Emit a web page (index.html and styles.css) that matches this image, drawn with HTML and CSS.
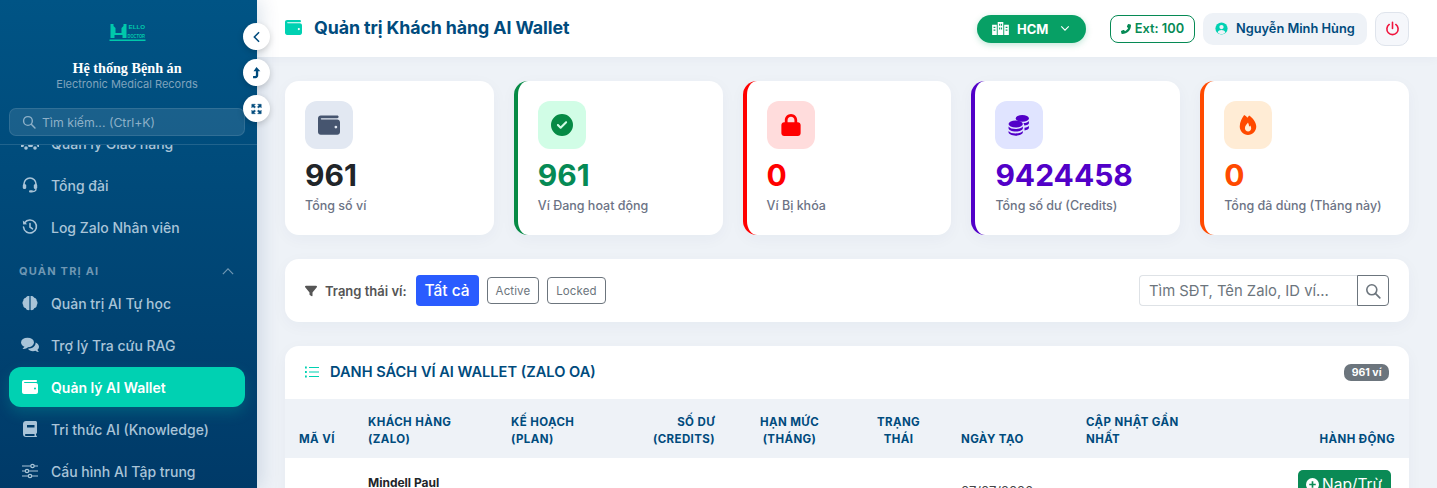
FILE: index.html
```html
<!DOCTYPE html>
<html lang="vi">
<head>
    <meta charset="UTF-8">
    <meta name="viewport" content="width=device-width, initial-scale=1.0">
    <title>Quản trị Khách hàng AI Wallet</title>
    <link rel="stylesheet" href="styles.css">
</head>
<body>
    <svg class="sprite" aria-hidden="true">
        <symbol id="i-wallet" viewBox="0 0 512 512"><path d="M64 32C28.7 32 0 60.7 0 96V416c0 35.3 28.7 64 64 64H448c35.3 0 64-28.7 64-64V192c0-35.3-28.7-64-64-64H80c-8.8 0-16-7.2-16-16s7.2-16 16-16H448c17.7 0 32-14.3 32-32s-14.3-32-32-32H64zM416 272a32 32 0 1 1 0 64 32 32 0 1 1 0-64z"/></symbol>
        <symbol id="i-check" viewBox="0 0 512 512"><path d="M256 512A256 256 0 1 0 256 0a256 256 0 1 0 0 512zM369 209L241 337c-9.4 9.4-24.6 9.4-33.9 0l-64-64c-9.4-9.4-9.4-24.6 0-33.9s24.6-9.4 33.9 0l47 47L335 175c9.4-9.4 24.6-9.4 33.9 0s9.4 24.6 0 33.9z"/></symbol>
        <symbol id="i-lock" viewBox="0 0 448 512"><path d="M144 144v48H304V144c0-44.2-35.8-80-80-80s-80 35.8-80 80zM80 192V144C80 64.5 144.5 0 224 0s144 64.5 144 144v48h16c35.3 0 64 28.7 64 64V448c0 35.3-28.7 64-64 64H64c-35.3 0-64-28.7-64-64V256c0-35.3 28.7-64 64-64H80z"/></symbol>
        <symbol id="i-filter" viewBox="0 0 512 512"><path d="M3.9 54.9C10.5 40.9 24.5 32 40 32H472c15.5 0 29.5 8.9 36.1 22.9s4.6 30.5-5.2 42.5L320 320.9V448c0 12.1-6.8 23.2-17.7 28.6s-23.8 4.3-33.5-3l-64-48c-8.1-6-12.8-15.5-12.8-25.6V320.9L9 97.3C-.7 85.4-2.8 68.8 3.9 54.9z"/></symbol>
        <symbol id="i-phone" viewBox="0 0 512 512"><path transform="matrix(-1 0 0 1 512 0)" d="M164.9 24.6c-7.7-18.6-28-28.5-47.4-23.2l-88 24C12.1 30.2 0 46 0 64C0 311.4 200.6 512 448 512c18 0 33.8-12.1 38.6-29.5l24-88c5.3-19.4-4.6-39.7-23.2-47.4l-96-40c-16.3-6.8-35.2-2.1-46.3 11.6L304.7 368C234.3 334.7 177.3 277.7 144 207.3L193.3 167c13.7-11.2 18.4-30 11.6-46.3l-40-96z"/></symbol>
        <symbol id="i-search" viewBox="0 0 16 16"><circle cx="6.8" cy="6.8" r="5" fill="none" stroke="currentColor" stroke-width="1.6"/><path d="M10.6 10.6l4.2 4.2" stroke="currentColor" stroke-width="1.7" stroke-linecap="round"/></symbol>
        <symbol id="i-coins" viewBox="0 0 20 20"><ellipse cx="13" cy="4" rx="6" ry="3"/><path d="M14 8.2c2.4-.1 4.4-.8 5-1.9v2c0 1-1.800 1.900-4.200 2.200 0-.9-.3-1.600-.8-2.300zM15 12.600c1.900-.3 3.400-1 4-1.900v2c0 1-1.700 1.900-4 2.200z"/><ellipse cx="7" cy="9" rx="6.500" ry="3.200"/><path d="M.5 11.400c1 1.500 3.500 2.300 6.500 2.300s5.500-.8 6.500-2.300v1.500c0 1.700-2.900 3-6.500 3s-6.500-1.300-6.500-3zM.5 15.400c1 1.500 3.500 2.300 6.500 2.300s5.500-.8 6.500-2.300v1.300c0 1.700-2.900 3-6.500 3s-6.500-1.300-6.500-3z"/></symbol>
        <symbol id="i-fire" viewBox="0 0 20 20"><path fill-rule="evenodd" d="M6.500 1c1 .4 2 1.200 2.900 2.500.5-.8 1-1.500 1.600-2.200 3.500 2.300 6.500 6.300 6.500 10 0 4.300-3.400 7.700-7.500 7.700s-7.500-3.400-7.500-7.700C2.500 7.500 4.500 3.700 6.500 1zM10 7.800c-.5 1.200-2.800 2.700-2.800 5.100 0 1.700 1.300 3 2.900 3s2.800-1.300 2.800-3c0-.8-.3-1.700-.8-2.500-.4.500-.8.900-1.100 1-.1-1.300-.4-2.500-1-3.600z"/></symbol>
    </svg>

    <div class="app">
        <aside class="sidebar">
            <div class="side-head">
                <svg class="logo" viewBox="0 0 36 20" aria-label="Hello Doctor">
                    <path d="M1 2h3v2l2 2v5h6V6l2-2V2h3v14h-4v-3H5v3H1z"/>
                    <text x="19" y="6.500" class="logo-top" textLength="16.500" lengthAdjust="spacingAndGlyphs">ELLO</text>
                    <text x="18" y="15.500" class="logo-bottom" textLength="17.500" lengthAdjust="spacingAndGlyphs">DOCTOR</text>
                    <rect x="0" y="17.500" width="36" height="1.500"/>
                </svg>
                <div class="side-title">Hệ thống Bệnh án</div>
                <div class="side-sub">Electronic Medical Records</div>
                <div class="side-search">
                    <svg class="icon icon-14"><use href="#i-search"/></svg>
                    <span>Tìm kiếm... (Ctrl+K)</span>
                </div>
            </div>
            <nav class="side-nav">
                <ul class="nav-list">
                    <li class="nav-item">
                        <svg class="nav-icon nav-icon-wide" viewBox="0 0 18 16"><path d="M0 2h11v3h3l4 4v3h-1.500a2.500 2.500 0 0 0-5 0h-4a2.500 2.500 0 0 0-5 0H0z"/><circle cx="5" cy="13" r="1.800"/><circle cx="14" cy="13" r="1.800"/></svg>
                        Quản lý Giao hàng
                    </li>
                    <li class="nav-item">
                        <svg class="nav-icon" viewBox="0 0 16 16"><path d="M2 9V7a6 6 0 0 1 12 0v2" fill="none" stroke="currentColor" stroke-width="1.600"/><rect x=".8" y="7" width="3.400" height="5" rx="1.500"/><rect x="11.800" y="7" width="3.400" height="5" rx="1.500"/><path d="M14 12c0 1.800-1.500 2.500-3.500 2.500" fill="none" stroke="currentColor" stroke-width="1.300"/><rect x="7" y="13.300" width="4" height="2.200" rx="1.100"/></svg>
                        Tổng đài
                    </li>
                    <li class="nav-item">
                        <svg class="nav-icon" viewBox="0 0 16 16"><path d="M2.600 3.800A6.500 6.500 0 1 1 1.500 8" fill="none" stroke="currentColor" stroke-width="1.600" stroke-linecap="round"/><path d="M.8 1.600l.4 4 4-.4z"/><path d="M8 4.500V8l2.500 1.800" fill="none" stroke="currentColor" stroke-width="1.600" stroke-linecap="round"/></svg>
                        Log Zalo Nhân viên
                    </li>
                    <li class="nav-label">
                        <span>Quản trị AI</span>
                        <svg class="nav-chevron" viewBox="0 0 14 8"><path d="M1 7l6-6 6 6" fill="none" stroke="currentColor" stroke-width="1.400"/></svg>
                    </li>
                    <li class="nav-item">
                        <svg class="nav-icon" viewBox="0 0 16 16"><path d="M7.400 1v14c-1.500.5-3.200-.3-3.600-1.800C2 13 1 11.500 1.200 10 .2 8.800.2 6.800 1.300 5.800 1.200 4 2.500 3 3.800 2.800 4.500 1.200 6 .6 7.400 1zM8.600 1v14c1.500.5 3.200-.3 3.600-1.800 1.800-.2 2.800-1.700 2.600-3.200 1-1.200 1-3.200-.1-4.200.1-1.800-1.200-2.800-2.500-3C11.500 1.200 10 .6 8.600 1z"/></svg>
                        Quản trị AI Tự học
                    </li>
                    <li class="nav-item">
                        <svg class="nav-icon nav-icon-wide" viewBox="0 0 18 16"><ellipse cx="6.500" cy="5.500" rx="6.500" ry="4.800"/><path d="M1.500 12l2.500-3 3 1.500c-2 1-4 1.500-5.500 1.500z"/><path d="M14.600 5.500c2 .8 3.400 2.400 3.400 4.200 0 1.200-.6 2.200-1.500 3 .2.900.8 1.700 1.500 2.300-1.400 0-2.600-.4-3.500-1.200-.8.300-1.600.4-2.500.4-2.300 0-4.200-1-5-2.500 4.400 0 7.800-2.600 7.600-6.200z"/></svg>
                        Trợ lý Tra cứu RAG
                    </li>
                    <li class="nav-item active">
                        <svg class="nav-icon"><use href="#i-wallet"/></svg>
                        Quản lý AI Wallet
                    </li>
                    <li class="nav-item">
                        <svg class="nav-icon" viewBox="0 0 14 16"><path fill-rule="evenodd" d="M3 0h9.500c.8 0 1.500.7 1.500 1.500v10c0 .6-.4 1.100-1 1.400v1.500c.6.100 1 .5 1 1 0 .4-.4.600-1 .6H3c-1.700 0-3-1.300-3-3V3c0-1.700 1.300-3 3-3zM3 13c-.6 0-1 .5-1 .9s.4 1 1 1h8.500V13zM4 4v2.500h7.500V4z"/></svg>
                        Tri thức AI (Knowledge)
                    </li>
                    <li class="nav-item">
                        <svg class="nav-icon" viewBox="0 0 16 16"><path d="M0 3h16M0 8h16M0 13h16" stroke="currentColor" stroke-width="1.200"/><g fill="#004069" stroke="currentColor" stroke-width="1.200"><circle cx="10.500" cy="3" r="1.700"/><circle cx="5" cy="8" r="1.700"/><circle cx="8" cy="13" r="1.700"/></g></svg>
                        Cấu hình AI Tập trung
                    </li>
                </ul>
            </nav>
        </aside>

        <div class="side-tools">
            <button class="tool-btn"><svg viewBox="0 0 10 14" class="tool-icon"><path d="M8 1.500L2.500 7 8 12.500" fill="none" stroke="currentColor" stroke-width="1.800"/></svg></button>
            <button class="tool-btn"><svg viewBox="0 0 10 14" class="tool-icon"><path d="M5 0L9.500 5H7v5c0 1.800-1.200 3-3 3H1v-2.500h2.500c.5 0 .8-.3.8-.8V5H1.500z" fill="currentColor"/></svg></button>
            <button class="tool-btn"><svg viewBox="0 0 14 14" class="tool-icon"><path d="M1 1h4.500L4 2.500 5.800 4.300 4.300 5.800 2.500 4 1 5.500zM13 1v4.500L11.500 4 9.700 5.800 8.200 4.300 10 2.500 8.500 1zM1 13V8.500L2.500 10l1.800-1.800 1.500 1.500L4 11.500 5.500 13zM13 13H8.500l1.500-1.500-1.800-1.800 1.500-1.500 1.800 1.800L13 8.500z" fill="currentColor" stroke="currentColor" stroke-width=".6"/></svg></button>
        </div>

        <div class="main">
            <header class="topbar">
                <h1 class="page-title">
                    <svg class="title-icon"><use href="#i-wallet"/></svg>
                    Quản trị Khách hàng AI Wallet
                </h1>
                <div class="top-right">
                    <button class="branch-pill">
                        <svg class="branch-icon" viewBox="0 0 18 14"><path fill-rule="evenodd" d="M0 3h5v11H0zM6 0h6v14H6zM13 3h5v11h-5zM1.500 5v1.500h2V5zM1.500 8v1.500h2V8zM7.500 2v2h1.200V2zM9.500 2v2h1.200V2zM7.500 6v2h1.200V6zM9.500 6v2h1.200V6zM14.500 5v1.500h2V5zM14.500 8v1.500h2V8z"/></svg>
                        HCM
                        <svg class="branch-caret" viewBox="0 0 12 8"><path d="M1.500 1.500L6 6l4.500-4.500" fill="none" stroke="currentColor" stroke-width="1.400"/></svg>
                    </button>
                    <div class="ext-badge"><svg class="icon icon-10"><use href="#i-phone"/></svg> Ext: 100</div>
                    <div class="user-chip">
                        <svg class="user-icon" viewBox="0 0 16 16"><circle cx="8" cy="8" r="6.500" fill="#00d1b2"/><circle cx="8" cy="6.500" r="2.300" fill="#eef2f7"/><path d="M3.800 12.200c.8-1.800 2.300-2.500 4.200-2.500s3.400.7 4.200 2.500A6 6 0 0 1 8 14a6 6 0 0 1-4.200-1.800z" fill="#eef2f7"/></svg>
                        Nguyễn Minh Hùng
                    </div>
                    <button class="power-btn"><svg viewBox="0 0 16 16" class="power-icon"><path d="M4.500 3.700a6 6 0 1 0 7 0M8 1.500v6.500" fill="none" stroke="currentColor" stroke-width="1.700" stroke-linecap="round"/></svg></button>
                </div>
            </header>

            <main class="content">
                <section class="stats">
                    <div class="stat-card">
                        <div class="stat-icon slate"><svg class="icon icon-22"><use href="#i-wallet"/></svg></div>
                        <div class="stat-value">961</div>
                        <div class="stat-label">Tổng số ví</div>
                    </div>
                    <div class="stat-card green">
                        <div class="stat-icon"><svg class="icon icon-22"><use href="#i-check"/></svg></div>
                        <div class="stat-value">961</div>
                        <div class="stat-label">Ví Đang hoạt động</div>
                    </div>
                    <div class="stat-card red">
                        <div class="stat-icon"><svg class="icon icon-22"><use href="#i-lock"/></svg></div>
                        <div class="stat-value">0</div>
                        <div class="stat-label">Ví Bị khóa</div>
                    </div>
                    <div class="stat-card purple">
                        <div class="stat-icon"><svg class="icon icon-22"><use href="#i-coins"/></svg></div>
                        <div class="stat-value">9424458</div>
                        <div class="stat-label">Tổng số dư (Credits)</div>
                    </div>
                    <div class="stat-card orange">
                        <div class="stat-icon"><svg class="icon icon-22"><use href="#i-fire"/></svg></div>
                        <div class="stat-value">0</div>
                        <div class="stat-label">Tổng đã dùng (Tháng này)</div>
                    </div>
                </section>

                <section class="filter-card">
                    <svg class="icon icon-12 filter-icon"><use href="#i-filter"/></svg>
                    <span class="filter-label">Trạng thái ví:</span>
                    <button class="btn-all">Tất cả</button>
                    <button class="btn-outline">Active</button>
                    <button class="btn-outline">Locked</button>
                    <div class="search-group">
                        <div class="search-input">Tìm SĐT, Tên Zalo, ID ví...</div>
                        <button class="search-btn"><svg class="icon icon-16"><use href="#i-search"/></svg></button>
                    </div>
                </section>

                <section class="table-card">
                    <div class="table-head">
                        <svg class="list-icon" viewBox="0 0 14 12"><path d="M4 1.500h10M4 6h10M4 10.500h10" stroke="currentColor" stroke-width="1.200"/><path d="M0 .6h1.800v1.800H0zM0 5.100h1.800v1.800H0zM0 9.600h1.800v1.800H0z" fill="currentColor"/></svg>
                        <h2 class="table-title">DANH SÁCH VÍ AI WALLET (ZALO OA)</h2>
                        <span class="count-badge">961 ví</span>
                    </div>
                    <table class="wallet-table">
                        <colgroup>
                            <col class="c-id"><col class="c-customer"><col class="c-plan"><col class="c-balance">
                            <col class="c-limit"><col class="c-status"><col class="c-created"><col class="c-updated"><col>
                        </colgroup>
                        <thead>
                            <tr>
                                <th>Mã ví</th>
                                <th>Khách hàng (Zalo)</th>
                                <th>Kế hoạch (Plan)</th>
                                <th class="right">Số dư (Credits)</th>
                                <th class="center">Hạn mức (Tháng)</th>
                                <th class="center">Trạng thái</th>
                                <th>Ngày tạo</th>
                                <th>Cập nhật gần nhất</th>
                                <th class="right">Hành động</th>
                            </tr>
                        </thead>
                        <tbody>
                            <tr>
                                <td></td>
                                <td><div class="cust-name">Mindell Paul</div></td>
                                <td></td>
                                <td></td>
                                <td></td>
                                <td></td>
                                <td class="date-cell">07/07/2026</td>
                                <td></td>
                                <td class="right">
                                    <button class="btn-topup">
                                        <svg class="topup-icon" viewBox="0 0 14 14"><circle cx="7" cy="7" r="7" fill="#fff"/><path d="M7 3.500v7M3.500 7h7" stroke="#0a8a55" stroke-width="1.800"/></svg>
                                        Nạp/Trừ
                                    </button>
                                </td>
                            </tr>
                        </tbody>
                    </table>
                </section>
            </main>
        </div>
    </div>
</body>
</html>
```

FILE: styles.css
```css
* {
    box-sizing: border-box;
}
html, body {
    height: 100%;
}
body {
    margin: 0;
    font-family: Inter, "Noto Sans", sans-serif;
    color: #212529;
    background-color: #eef2f7;
    overflow: hidden;
}
button {
    font-family: inherit;
    cursor: pointer;
}
.sprite {
    display: none;
}
.icon {
    fill: currentColor;
    display: block;
}
.icon-10 { width: 10px; height: 10px; }
.icon-12 { width: 12px; height: 12px; }
.icon-14 { width: 14px; height: 14px; }
.icon-16 { width: 16px; height: 16px; }
.icon-22 { width: 22px; height: 22px; }

.app {
    display: flex;
    height: 100vh;
    position: relative;
}

/* sidebar */
.sidebar {
    width: 257px;
    flex-shrink: 0;
    display: flex;
    flex-direction: column;
    background: linear-gradient(180deg, #005485 0%, #003a68 100%);
    box-shadow: 4px 0 18px rgba(0, 60, 110, 0.14);
    z-index: 2;
}
.side-head {
    height: 145px;
    flex-shrink: 0;
    padding: 22px 12px 0 9px;
    border-bottom: 1px solid rgba(255, 255, 255, 0.13);
    text-align: center;
}
.logo {
    display: block;
    width: 37px;
    height: 20px;
    margin: 0 auto;
    fill: #00c9ab;
}
.logo-top,
.logo-bottom {
    font-family: "Liberation Sans", sans-serif;
    font-size: 6px;
    font-weight: 700;
}
.side-title {
    margin-top: 17px;
    font-family: "Liberation Serif", serif;
    font-size: 14.200px;
    line-height: 18px;
    font-weight: 700;
    color: #fff;
}
.side-sub {
    font-size: 11px;
    line-height: 15px;
    color: #7fa3bd;
}
.side-search {
    display: flex;
    align-items: center;
    gap: 6px;
    height: 28px;
    margin-top: 16px;
    padding-left: 12px;
    font-size: 12.300px;
    color: #8db0c8;
    background-color: rgba(255, 255, 255, 0.1);
    border: 1px solid rgba(255, 255, 255, 0.1);
    border-radius: 7px;
    text-align: left;
}
.side-nav {
    flex: 1;
    overflow: hidden;
    padding: 0 12px 0 9px;
}
.nav-list {
    list-style: none;
    margin: -22px 0 0;
    padding: 0;
}
.nav-item {
    display: flex;
    align-items: center;
    gap: 13px;
    height: 40px;
    margin-bottom: 2px;
    padding-left: 13px;
    font-size: 14px;
    font-weight: 500;
    color: #a9c4d8;
    border-radius: 12px;
}
.nav-item.active {
    color: #fff;
    font-weight: 600;
    background-color: #00d1b2;
    box-shadow: 0 6px 14px rgba(0, 209, 178, 0.2);
}
.nav-icon {
    width: 16px;
    height: 16px;
    flex-shrink: 0;
    fill: currentColor;
}
.nav-icon-wide {
    width: 18px;
    margin: 0 -1px;
}
.nav-label {
    display: flex;
    align-items: center;
    justify-content: space-between;
    height: 34px;
    padding: 10px 11px 0 10px;
    font-size: 11px;
    font-weight: 700;
    letter-spacing: 1.200px;
    text-transform: uppercase;
    color: #6f97b3;
}
.nav-chevron {
    width: 12px;
    height: 7px;
}

/* round buttons on the sidebar edge */
.side-tools {
    position: absolute;
    left: 243px;
    top: 23px;
    display: flex;
    flex-direction: column;
    gap: 9px;
    z-index: 3;
}
.tool-btn {
    display: flex;
    align-items: center;
    justify-content: center;
    width: 27px;
    height: 27px;
    padding: 0;
    border: 0;
    border-radius: 50%;
    color: #004b7d;
    background-color: #fff;
    box-shadow: 0 2px 6px rgba(0, 0, 0, 0.18);
}
.tool-icon {
    width: 11px;
    height: 12px;
}

/* top bar */
.main {
    flex: 1;
    min-width: 0;
    display: flex;
    flex-direction: column;
}
.topbar {
    display: flex;
    align-items: center;
    justify-content: space-between;
    height: 57px;
    flex-shrink: 0;
    padding: 0 28px;
    background-color: #fff;
    box-shadow: 0 2px 10px rgba(0, 40, 90, 0.04);
}
.page-title {
    display: flex;
    align-items: center;
    gap: 12px;
    margin: 0;
    padding-bottom: 2px;
    font-size: 17.800px;
    font-weight: 700;
    color: #004b7d;
    letter-spacing: -0.1px;
}
.title-icon {
    width: 17px;
    height: 17px;
    fill: #00d1b2;
}
.top-right {
    display: flex;
    align-items: center;
    gap: 8px;
}
.branch-pill {
    display: flex;
    align-items: center;
    width: 109px;
    height: 28px;
    margin-right: 16px;
    padding: 0 16px 0 15px;
    font-size: 13px;
    font-weight: 700;
    color: #fff;
    background-color: #07a065;
    border: 0;
    border-radius: 14px;
    box-shadow: 0 2px 6px rgba(7, 160, 101, 0.25);
}
.branch-icon {
    width: 17px;
    height: 13px;
    margin-right: 8px;
    fill: currentColor;
}
.branch-caret {
    width: 10px;
    height: 7px;
    margin-left: auto;
}
.ext-badge {
    display: flex;
    align-items: center;
    gap: 4px;
    width: 85px;
    height: 28px;
    justify-content: center;
    font-size: 12.800px;
    font-weight: 600;
    color: #068a55;
    background-color: #fff;
    border: 1px solid #068a55;
    border-radius: 8px;
}
.user-chip {
    display: flex;
    align-items: center;
    gap: 7px;
    width: 164px;
    height: 32px;
    padding-left: 11px;
    font-size: 12.800px;
    font-weight: 600;
    color: #004b7d;
    background-color: #eef2f7;
    border-radius: 10px;
}
.user-icon {
    width: 15px;
    height: 15px;
}
.power-btn {
    display: flex;
    align-items: center;
    justify-content: center;
    width: 34px;
    height: 34px;
    padding: 0;
    color: #f0143c;
    background-color: #f5f7fb;
    border: 1px solid #dfe4ec;
    border-radius: 10px;
}
.power-icon {
    width: 15px;
    height: 15px;
}

/* page content */
.content {
    flex: 1;
    padding: 24px 28px;
    overflow: hidden;
}
.stats {
    display: grid;
    grid-template-columns: repeat(5, 1fr);
    gap: 20px;
    margin-bottom: 24px;
}
.stat-card {
    height: 154px;
    padding: 20px;
    background-color: #fff;
    border-radius: 14px;
    box-shadow: 0 4px 16px rgba(0, 40, 90, 0.04);
}
.stat-icon {
    display: flex;
    align-items: center;
    justify-content: center;
    width: 48px;
    height: 48px;
    border-radius: 12px;
    background-color: #e2e8f2;
    color: #46556f;
    margin-bottom: 8px;
}
.stat-value {
    font-size: 30px;
    line-height: 36px;
    font-weight: 700;
    color: #212529;
}
.stat-label {
    margin-top: 4px;
    font-size: 12.500px;
    line-height: 18px;
    font-weight: 500;
    color: #6c7385;
}
.stat-card.green { border-left: 4px solid #068a45; }
.stat-card.green .stat-icon { background-color: #d1fde6; color: #068a45; }
.stat-card.green .stat-value { color: #068a55; }
.stat-card.red { border-left: 4px solid #f00; }
.stat-card.red .stat-icon { background-color: #ffdcdc; color: #f00; }
.stat-card.red .stat-value { color: #f00; }
.stat-card.purple { border-left: 4px solid #5200c8; }
.stat-card.purple .stat-icon { background-color: #e0e4ff; color: #5200c8; }
.stat-card.purple .stat-value { color: #5200c8; }
.stat-card.orange { border-left: 4px solid #ff4a00; }
.stat-card.orange .stat-icon { background-color: #ffecd5; color: #ff4a00; }
.stat-card.orange .stat-value { color: #ff4a00; }

/* filter row */
.filter-card {
    display: flex;
    align-items: center;
    height: 63px;
    margin-bottom: 24px;
    padding: 0 20px;
    background-color: #fff;
    border-radius: 14px;
    box-shadow: 0 4px 16px rgba(0, 40, 90, 0.04);
}
.filter-icon {
    color: #555;
    margin-right: 8px;
}
.filter-label {
    margin-right: 9px;
    font-size: 13px;
    font-weight: 600;
    color: #555;
}
.btn-all {
    width: 63px;
    height: 31px;
    margin-right: 8px;
    padding: 0;
    font-size: 15.500px;
    font-weight: 500;
    color: #fff;
    background-color: #2a5cff;
    border: 0;
    border-radius: 4px;
}
.btn-outline {
    height: 27px;
    margin-right: 8px;
    padding: 0 8px;
    font-size: 11.500px;
    letter-spacing: 0.1px;
    color: #6c757d;
    background-color: #fff;
    border: 1px solid #6c757d;
    border-radius: 4px;
}
.search-group {
    display: flex;
    width: 250px;
    height: 31px;
    margin-left: auto;
}
.search-input {
    flex: 1;
    display: flex;
    align-items: center;
    padding-left: 9px;
    font-size: 14.800px;
    color: #6c757d;
    border: 1px solid #dee2e6;
    border-right: 0;
    border-radius: 4px 0 0 4px;
}
.search-btn {
    display: flex;
    align-items: center;
    justify-content: center;
    width: 32px;
    padding: 0;
    color: #6c757d;
    background-color: #fff;
    border: 1px solid #6c757d;
    border-radius: 0 4px 4px 0;
}

/* wallet table */
.table-card {
    background-color: #fff;
    border-radius: 14px 14px 0 0;
    overflow: hidden;
    box-shadow: 0 4px 16px rgba(0, 40, 90, 0.04);
}
.table-head {
    display: flex;
    align-items: center;
    height: 53px;
    padding: 0 20px 1px;
}
.list-icon {
    width: 14px;
    height: 12px;
    margin-right: 11px;
    color: #00d1b2;
}
.table-title {
    margin: 0;
    font-size: 14.600px;
    font-weight: 600;
    color: #004b7d;
}
.count-badge {
    margin-left: auto;
    padding: 2px 7.500px;
    font-size: 10.500px;
    line-height: 13px;
    font-weight: 700;
    color: #fff;
    background-color: #6c757d;
    border-radius: 7px;
}
.wallet-table {
    width: 100%;
    table-layout: fixed;
    border-collapse: collapse;
}
.c-id { width: 69px; }
.c-customer { width: 143px; }
.c-plan { width: 108px; }
.c-balance { width: 124px; }
.c-limit { width: 121px; }
.c-status { width: 97px; }
.c-created { width: 125px; }
.c-updated { width: 128px; }
.wallet-table th {
    height: 59px;
    padding: 0 14px 10px;
    vertical-align: bottom;
    text-align: left;
    font-size: 11.500px;
    line-height: 17px;
    font-weight: 700;
    letter-spacing: 0.4px;
    text-transform: uppercase;
    color: #004b7d;
    background-color: #eef2f7;
}
.wallet-table td {
    height: 66px;
    padding: 12px 14px;
    font-size: 12px;
    color: #444;
}
.wallet-table .right {
    text-align: right;
}
.wallet-table .center {
    text-align: center;
}
.wallet-table .date-cell {
    font-size: 13px;
}
.cust-name {
    font-weight: 700;
    color: #212529;
    margin-bottom: 18px;
}
.btn-topup {
    display: inline-flex;
    align-items: flex-start;
    gap: 3px;
    width: 93px;
    height: 42px;
    margin-right: 4px;
    padding: 6px 8px;
    font-size: 15.500px;
    line-height: 18px;
    color: #fff;
    background-color: #0a8a55;
    border: 0;
    border-radius: 5px;
    vertical-align: middle;
}
.topup-icon {
    width: 13px;
    height: 13px;
    margin-top: 2px;
    flex-shrink: 0;
}
```
